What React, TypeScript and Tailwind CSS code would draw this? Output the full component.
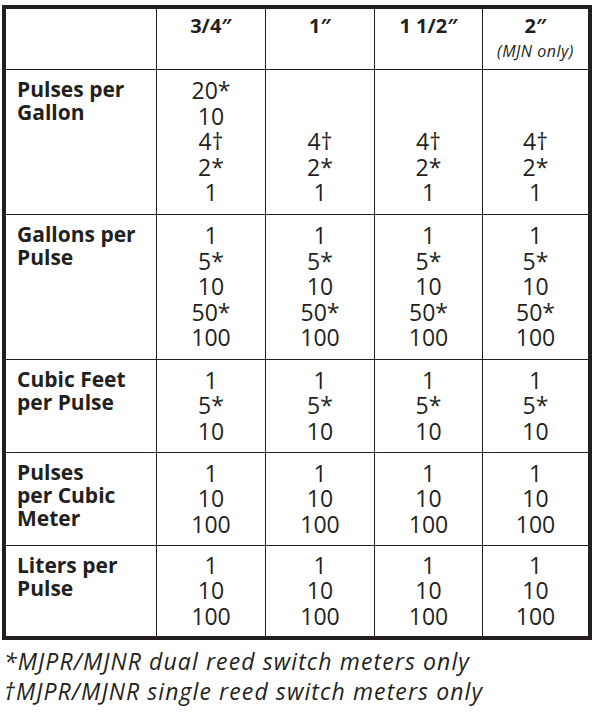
import React from "react";

const NB = "\u00a0";

type Row = { label: string[]; h: string; cols: string[][]; last?: boolean };

const rows: Row[] = [
  {
    label: ["Pulses per", "Gallon"],
    h: "h-[145px]",
    cols: [
      ["20*", "10", "4\u2020", "2*", "1"],
      [NB, NB, "4\u2020", "2*", "1"],
      [NB, NB, "4\u2020", "2*", "1"],
      [NB, NB, "4\u2020", "2*", "1"],
    ],
  },
  {
    label: ["Gallons per", "Pulse"],
    h: "h-[145px]",
    cols: [
      ["1", "5*", "10", "50*", "100"],
      ["1", "5*", "10", "50*", "100"],
      ["1", "5*", "10", "50*", "100"],
      ["1", "5*", "10", "50*", "100"],
    ],
  },
  {
    label: ["Cubic Feet", "per Pulse"],
    h: "h-[93px]",
    cols: [
      ["1", "5*", "10"],
      ["1", "5*", "10"],
      ["1", "5*", "10"],
      ["1", "5*", "10"],
    ],
  },
  {
    label: ["Pulses", "per Cubic", "Meter"],
    h: "h-[93px]",
    cols: [
      ["1", "10", "100"],
      ["1", "10", "100"],
      ["1", "10", "100"],
      ["1", "10", "100"],
    ],
  },
  {
    label: ["Liters per", "Pulse"],
    h: "h-[90px]",
    last: true,
    cols: [
      ["1", "10", "100"],
      ["1", "10", "100"],
      ["1", "10", "100"],
      ["1", "10", "100"],
    ],
  },
];

const headers = ["3/4\u2033", "1\u2033", "1 1/2\u2033", "2\u2033"];

export default function App() {
  return (
    <div className="w-[602px] h-[722px] bg-white text-[#231f20] font-['Open_Sans',sans-serif] overflow-hidden">
      <div className="pt-[5px] pl-[2px]">
        <div className="w-[590px] border-4 border-[#231f20]">
          {/* Header */}
          <div className="grid grid-cols-[150px_109px_109px_108px_1fr] h-[61px] border-b border-[#231f20]">
            <div />
            {headers.map((h, i) => (
              <div
                key={i}
                className="border-l border-[#231f20] flex flex-col items-center pt-[5px]"
              >
                <div className="text-[20px] leading-[24px] font-bold">{h}</div>
                {i === 3 && (
                  <div className="mt-[4px] text-[16px] leading-[18px] italic tracking-[0.5px]">
                    (MJN only)
                  </div>
                )}
              </div>
            ))}
          </div>
          {rows.map((r, ri) => (
            <div
              key={ri}
              className={`grid grid-cols-[150px_109px_109px_108px_1fr] ${r.h} ${
                r.last ? "" : "border-b border-[#231f20]"
              }`}
            >
              <div className="pl-[11px] pt-[8px] text-[21px] leading-[23px] font-bold">
                {r.label.map((l, li) => (
                  <div key={li}>{l}</div>
                ))}
              </div>
              {r.cols.map((c, ci) => (
                <div
                  key={ci}
                  className="border-l border-[#231f20] flex flex-col items-center justify-center text-[23px] leading-[25.5px]"
                >
                  {c.map((v, vi) => (
                    <div key={vi}>{v}</div>
                  ))}
                </div>
              ))}
            </div>
          ))}
        </div>
        <div className="mt-[6px] pl-[2px] italic text-[23px] leading-[30px] tracking-[1.1px]">
          <div>*MJPR/MJNR dual reed switch meters only</div>
          <div>{"\u2020"}MJPR/MJNR single reed switch meters only</div>
        </div>
      </div>
    </div>
  );
}
